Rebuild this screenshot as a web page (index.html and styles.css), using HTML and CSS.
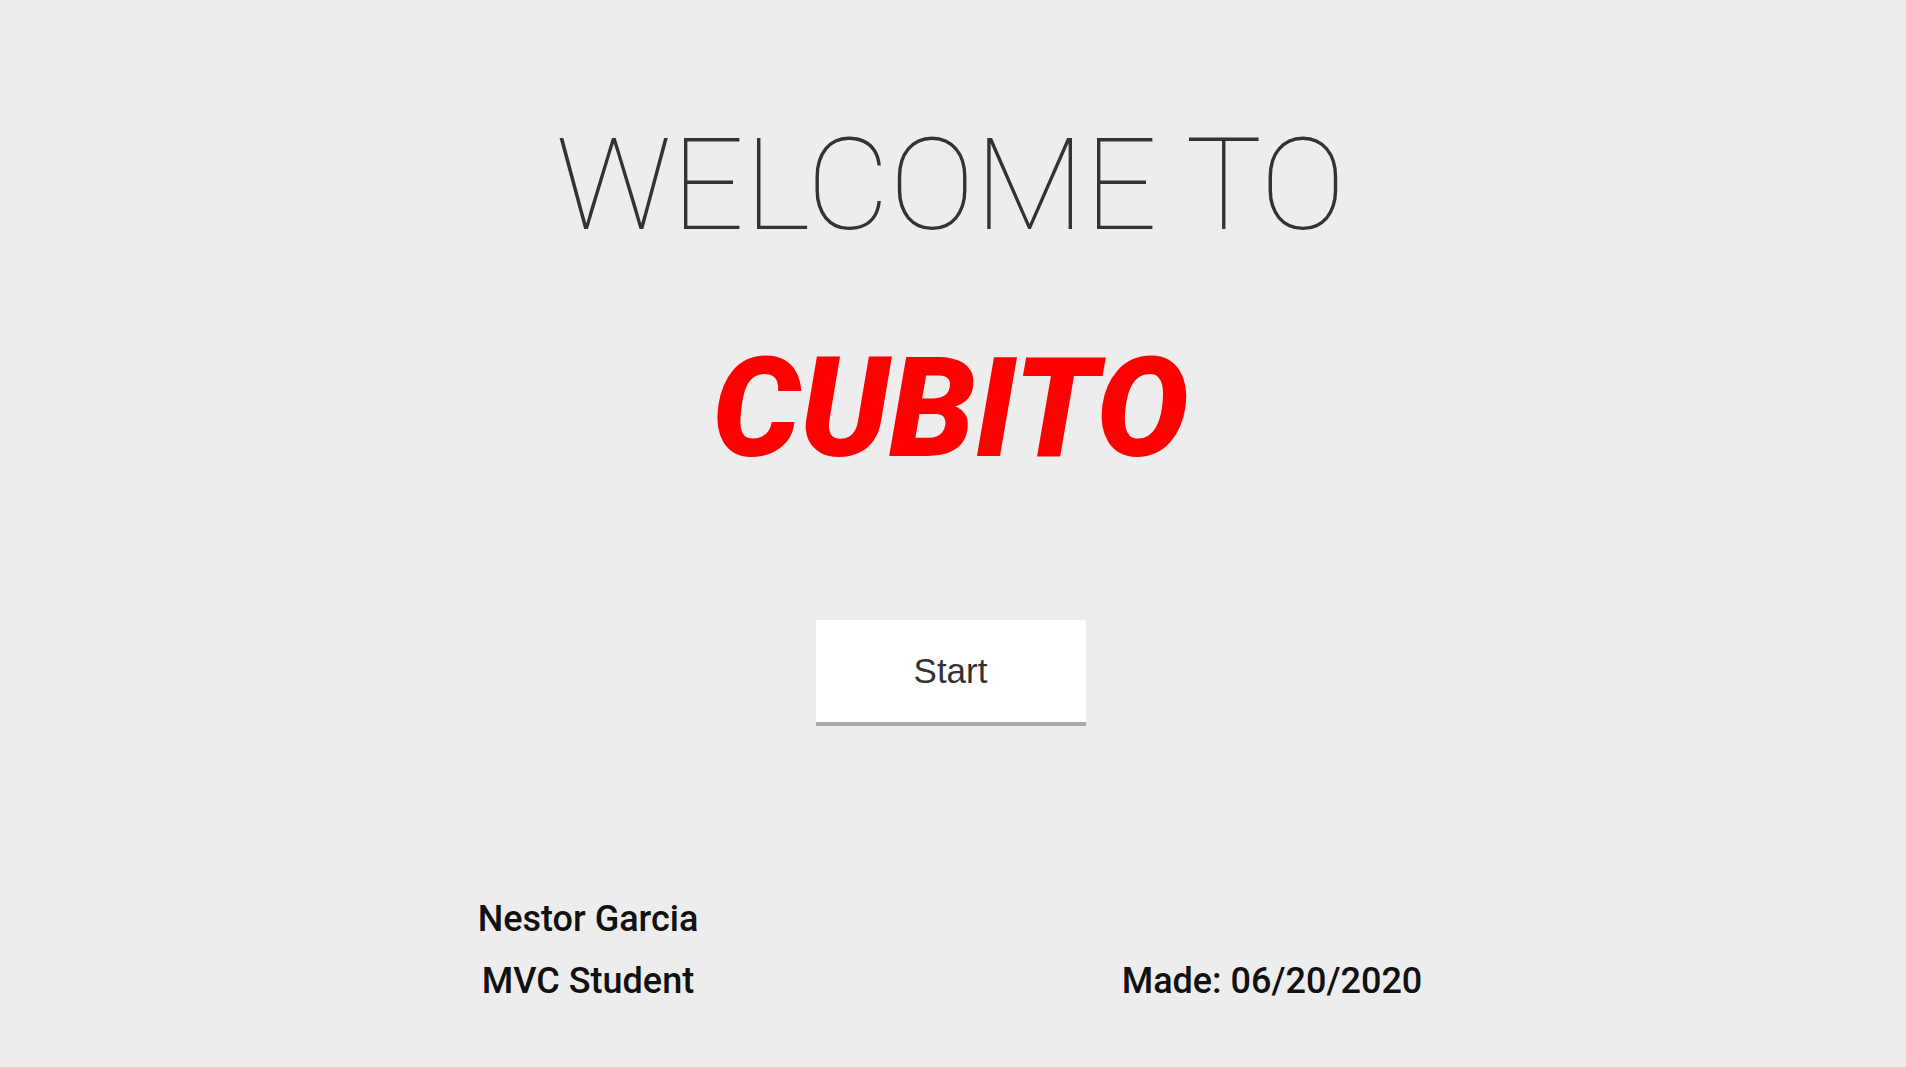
FILE: index.html
```html
<!DOCTYPE html>
<html lang="en">
<head>
<meta charset="utf-8">
<title>Cubito</title>
<link rel="stylesheet" href="styles.css">
</head>
<body>
<main class="page">
  <h1 class="welcome">WELCOME TO</h1>
  <h2 class="brand">CUBITO</h2>
  <button class="start" type="button">Start</button>
  <footer class="footer">
    <div class="author">
      <p class="line">Nestor Garcia</p>
      <p class="line">MVC Student</p>
    </div>
    <div class="spacer"></div>
    <div class="made">
      <p class="line">Made: 06/20/2020</p>
    </div>
  </footer>
</main>
</body>
</html>
```

FILE: styles.css
```css
html, body {
  margin: 0;
  padding: 0;
}
body {
  background: #ededed;
  font-family: Roboto, "Liberation Sans", sans-serif;
  min-height: 100vh;
}
.page {
  display: flex;
  flex-direction: column;
  align-items: center;
  padding-top: 121px;
  padding-right: 5px;
}
.welcome {
  margin: 0;
  font-family: Roboto, sans-serif;
  font-weight: 100;
  font-size: 128px;
  line-height: 1;
  color: #333333;
  letter-spacing: 0;
}
.brand {
  margin: 91px 0 0;
  font-family: Roboto, sans-serif;
  font-weight: 900;
  font-style: italic;
  font-size: 138px;
  line-height: 1;
  color: #ff0000;
}
.start {
  margin-top: 142px;
  width: 270px;
  height: 106px;
  background: #ffffff;
  border: none;
  border-bottom: 4px solid #aaaaaa;
  border-radius: 0;
  font-family: "Liberation Sans", Arial, sans-serif;
  font-size: 35px;
  color: #333333;
  padding: 0;
  cursor: pointer;
}
.footer {
  align-self: stretch;
  margin-top: 162px;
  padding-left: 383px;
  display: grid;
  grid-template-columns: 410px 274px 410px;
  align-items: end;
}
.author, .made {
  display: flex;
  flex-direction: column;
  align-items: center;
}
.line {
  margin: 0;
  font-family: Roboto, sans-serif;
  font-weight: 500;
  font-size: 36px;
  line-height: 62px;
  color: #111111;
}
```
